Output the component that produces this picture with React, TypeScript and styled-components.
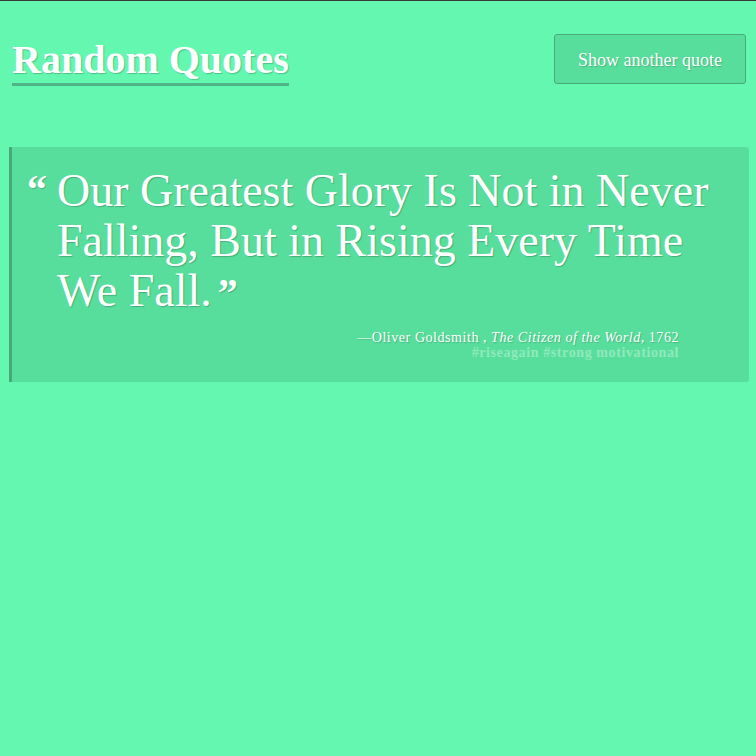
import React from "react";
import styled, { createGlobalStyle } from "styled-components";

const Global = createGlobalStyle`
  html, body { margin: 0; padding: 0; }
  body {
    background: #63f7b0;
    border-top: 1px solid #3a3a3a;
    min-height: 755px;
    font-family: "Liberation Serif", "Times New Roman", serif;
    color: #ffffff;
  }
`;

const Page = styled.div`
  display: flex;
  flex-direction: column;
`;

const Header = styled.header`
  display: flex;
  justify-content: space-between;
  align-items: flex-start;
  padding: 33px 10px 0 12px;
`;

const Title = styled.h1`
  margin: 6px 0 0;
  font-size: 40px;
  line-height: 40px;
  font-weight: 700;
  padding-bottom: 3px;
  border-bottom: 3px solid #4fb486;
  text-shadow: 1px 1px 1px rgba(0, 0, 0, 0.22);
`;

const Button = styled.button`
  width: 192px;
  height: 50px;
  padding: 2px 0 0;
  background: #58de9c;
  border: 1px solid #48a87a;
  border-radius: 3px;
  color: #ffffff;
  font-family: "Liberation Serif", "Times New Roman", serif;
  font-size: 18px;
  text-shadow: 1px 1px 1px rgba(0, 0, 0, 0.2);
  cursor: pointer;
`;

const Card = styled.blockquote`
  margin: 61px 7px 0 9px;
  background: #58de9c;
  border-left: 3px solid #4aa97c;
  border-radius: 0 3px 3px 0;
  padding: 19px 20px 22px 15px;
  display: flex;
  flex-direction: column;
`;

const QuoteRow = styled.div`
  display: flex;
  align-items: flex-start;
  gap: 10px;
`;

const Mark = styled.span`
  font-size: 40px;
  font-weight: 700;
  line-height: 40px;
  width: 20px;
  margin-top: 4px;
  text-shadow: 1px 1px 1px rgba(0, 0, 0, 0.2);
`;

const QuoteText = styled.p`
  margin: 0;
  flex: 1;
  font-size: 46px;
  line-height: 50px;
  text-shadow: 1px 1px 1px rgba(0, 0, 0, 0.22);
`;

const CloseMark = styled.span`
  display: inline-block;
  font-size: 40px;
  line-height: 40px;
  font-weight: 700;
  margin-left: 6px;
`;

const Footer = styled.footer`
  margin: 14px 50px 0 0;
  display: flex;
  flex-direction: column;
  align-items: flex-end;
  font-size: 14px;
  line-height: 15px;
`;

const Cite = styled.div`
  letter-spacing: 0.55px;
  text-shadow: 1px 1px 1px rgba(0, 0, 0, 0.2);
`;

const Author = styled.span`
  font-weight: 400;
`;

const Work = styled.i``;

const Tags = styled.div`
  font-weight: 700;
  color: rgba(255, 255, 255, 0.35);
  letter-spacing: 0.6px;
`;

export default function App() {
  return (
    <>
      <Global />
      <Page>
        <Header>
          <Title>Random Quotes</Title>
          <Button>Show another quote</Button>
        </Header>
        <Card>
          <QuoteRow>
            <Mark>“</Mark>
            <QuoteText>
              Our Greatest Glory Is Not in Never Falling, But in Rising Every Time We Fall.
              <CloseMark>”</CloseMark>
            </QuoteText>
          </QuoteRow>
          <Footer>
            <Cite>
              —<Author>Oliver Goldsmith</Author> , <Work>The Citizen of the World</Work>, 1762
            </Cite>
            <Tags>#riseagain #strong motivational</Tags>
          </Footer>
        </Card>
      </Page>
    </>
  );
}
